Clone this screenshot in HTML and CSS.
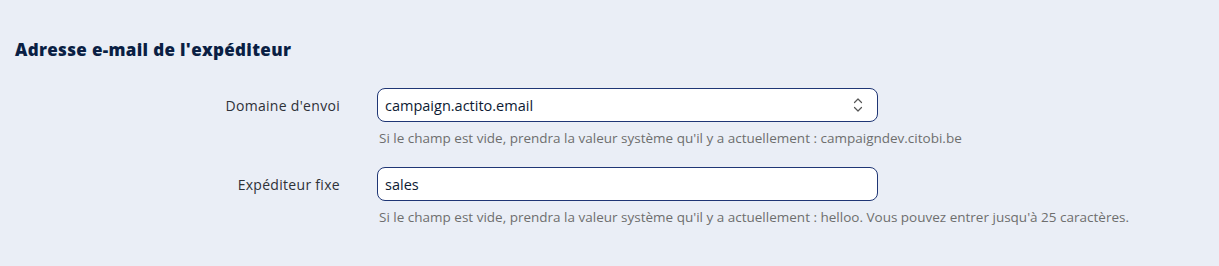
FILE: index.html
```html
<!DOCTYPE html>
<html lang="fr">
<head>
<meta charset="utf-8">
<title>Adresse e-mail de l'expéditeur</title>
<link rel="stylesheet" href="styles.css">
</head>
<body>
<section class="panel">
  <h2 class="panel-title">Adresse e-mail de l'expéditeur</h2>
  <div class="form">
    <div class="row">
      <label class="label">Domaine d'envoi</label>
      <div class="field">
        <div class="control select">
          <span class="value">campaign.actito.email</span>
          <svg class="chevrons" width="10" height="16" viewBox="0 0 10 16" aria-hidden="true">
            <path d="M1.5 5.5 L5 2 L8.5 5.5" fill="none" stroke="#555" stroke-width="1.2" stroke-linecap="round" stroke-linejoin="round"/>
            <path d="M1.5 10.5 L5 14 L8.5 10.5" fill="none" stroke="#555" stroke-width="1.2" stroke-linecap="round" stroke-linejoin="round"/>
          </svg>
        </div>
        <p class="help">Si le champ est vide, prendra la valeur système qu'il y a actuellement : campaigndev.citobi.be</p>
      </div>
    </div>
    <div class="row">
      <label class="label">Expéditeur fixe</label>
      <div class="field">
        <div class="control">
          <span class="value">sales</span>
        </div>
        <p class="help">Si le champ est vide, prendra la valeur système qu'il y a actuellement : helloo. Vous pouvez entrer jusqu'à 25 caractères.</p>
      </div>
    </div>
  </div>
</section>
</body>
</html>
```
FILE: styles.css
```css
html, body {
  margin: 0;
  padding: 0;
  background: #eaeef6;
}
body {
  font-family: "Open Sans", "Liberation Sans", sans-serif;
  color: #2b2f36;
}
.panel {
  padding: 38px 15px 0;
}
.panel-title {
  margin: 0;
  font-family: "Open Sans", "Liberation Sans", sans-serif;
  font-size: 17px;
  line-height: 24px;
  font-weight: 800;
  color: #0a1f44;
  letter-spacing: 0.33px;
}
.form {
  margin-top: 26px;
  display: flex;
  flex-direction: column;
  gap: 20px;
}
.row {
  display: grid;
  grid-template-columns: 325px 501px;
  column-gap: 37px;
}
.label {
  height: 34px;
  display: flex;
  align-items: center;
  justify-content: flex-end;
  font-size: 14px;
  letter-spacing: 0.3px;
  color: #2e3138;
}
.control {
  box-sizing: border-box;
  height: 34px;
  background: #fff;
  border: 1px solid #1f3675;
  border-radius: 8px;
  display: flex;
  align-items: center;
  justify-content: space-between;
  padding: 0 14px 0 7px;
}
.value {
  font-size: 14.5px;
  color: #0d1a33;
}
.chevrons {
  display: block;
}
.help {
  margin: 7px 0 0 2px;
  font-size: 13.5px;
  line-height: 18px;
  color: #6e6e6e;
  white-space: nowrap;
}
```
